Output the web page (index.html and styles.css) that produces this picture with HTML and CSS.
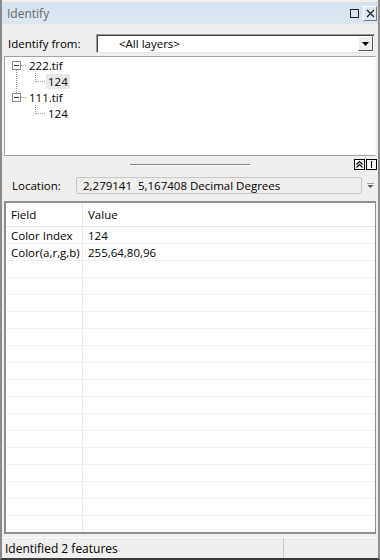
FILE: index.html
```html
<!DOCTYPE html>
<html>
<head>
<meta charset="utf-8">
<link rel="stylesheet" href="styles.css">
</head>
<body>
<div class="win">
  <div class="titlebar">
    <span class="title">Identify</span>
    <div class="tbtns">
      <span class="tb-max"><svg width="11" height="11" viewBox="0 0 11 11"><rect x="1.5" y="1.5" width="8" height="8" fill="none" stroke="#222" stroke-width="1"/></svg></span>
      <span class="tb-close"><svg width="11" height="11" viewBox="0 0 11 11"><path d="M2 2L9 9M9 2L2 9" stroke="#222" stroke-width="1.3"/></svg></span>
    </div>
  </div>
  <div class="fromrow">
    <span class="lbl">Identify from:</span>
    <div class="combo">
      <span class="combo-text">&lt;All layers&gt;</span>
      <span class="combo-btn"><svg width="7" height="4" viewBox="0 0 7 4"><path d="M0 0H7L3.5 4Z" fill="#000"/></svg></span>
    </div>
  </div>
  <div class="tree">
    <div class="node">
      <span class="pm"></span><span class="dots"></span><span class="ntext">222.tif</span>
    </div>
    <div class="leaf"><span class="ldots"></span><span class="ntext sel">124</span></div>
    <div class="node">
      <span class="pm"></span><span class="dots"></span><span class="ntext">111.tif</span>
    </div>
    <div class="leaf"><span class="ldots"></span><span class="ntext">124</span></div>
    <span class="vline"></span>
  </div>
  <div class="splitter">
    <span class="grip"></span>
    <div class="sbtns">
      <span class="sbtn"><svg width="9" height="9" viewBox="0 0 9 9"><path d="M1.5 4.5L4.5 1.5L7.5 4.5M1.5 7.5L4.5 4.5L7.5 7.5" fill="none" stroke="#000" stroke-width="1.2"/></svg></span>
      <span class="sbtn"><svg width="9" height="9" viewBox="0 0 9 9"><path d="M4.5 1V8" stroke="#000" stroke-width="1.2"/></svg></span>
    </div>
  </div>
  <div class="locrow">
    <span class="lbl">Location:</span>
    <div class="locbox">2,279141&nbsp; 5,167408 Decimal Degrees</div>
    <span class="locarrow"><svg width="7" height="6" viewBox="0 0 7 6"><path d="M0 0H7" stroke="#555"/><path d="M0.5 2H6.5L3.5 5Z" fill="#555"/></svg></span>
  </div>
  <div class="grid">
    <div class="ghead"><span class="c1">Field</span><span class="c2">Value</span></div>
    <div class="grow"><span class="c1">Color Index</span><span class="c2">124</span></div>
    <div class="grow"><span class="c1">Color(a,r,g,b)</span><span class="c2">255,64,80,96</span></div>
    <div class="grow"><span class="c1"></span><span class="c2"></span></div>
    <div class="grow"><span class="c1"></span><span class="c2"></span></div>
    <div class="grow"><span class="c1"></span><span class="c2"></span></div>
    <div class="grow"><span class="c1"></span><span class="c2"></span></div>
    <div class="grow"><span class="c1"></span><span class="c2"></span></div>
    <div class="grow"><span class="c1"></span><span class="c2"></span></div>
    <div class="grow"><span class="c1"></span><span class="c2"></span></div>
    <div class="grow"><span class="c1"></span><span class="c2"></span></div>
    <div class="grow"><span class="c1"></span><span class="c2"></span></div>
    <div class="grow"><span class="c1"></span><span class="c2"></span></div>
    <div class="grow"><span class="c1"></span><span class="c2"></span></div>
    <div class="grow"><span class="c1"></span><span class="c2"></span></div>
    <div class="grow"><span class="c1"></span><span class="c2"></span></div>
    <div class="grow"><span class="c1"></span><span class="c2"></span></div>
    <div class="grow"><span class="c1"></span><span class="c2"></span></div>
    <div class="grow"><span class="c1"></span><span class="c2"></span></div>
    <div class="gfill"><span class="c1"></span><span class="c2"></span></div>
  </div>
  <div class="status">
    <span class="st1">Identified 2 features</span>
    <span class="st2"></span>
  </div>
</div>
</body>
</html>
```
FILE: styles.css
```css
html, body {
  margin: 0;
  padding: 0;
  background: #f0efed;
}
body {
  width: 380px;
  height: 560px;
  overflow: hidden;
  font-family: "Open Sans", "DejaVu Sans", sans-serif;
  font-size: 11.5px;
  color: #000;
}
.win {
  width: 380px;
  height: 560px;
  box-sizing: border-box;
  border-left: 2px solid #8a8a8a;
  border-right: 2px solid #8a8a8a;
  border-bottom: 2px solid #3a3a3a;
  display: flex;
  flex-direction: column;
  background: #f0efed;
}
.titlebar {
  height: 22px;
  margin-top: 2px;
  background: linear-gradient(#d6e2ee, #dbe6f1);
  display: flex;
  align-items: center;
  justify-content: space-between;
  padding: 0 1px 0 5px;
  flex-shrink: 0;
}
.title {
  color: #6b6b6b;
  font-size: 12px;
}
.tbtns {
  display: flex;
  gap: 3px;
  align-items: center;
}
.tbtns span {
  width: 12px;
  height: 13px;
  display: flex;
  align-items: center;
  justify-content: center;
}
.tb-close {
  border: 1px solid #7a7a7a;
  border-top-color: #fff;
  border-left-color: #fff;
  background: #dde7f1;
}
.fromrow {
  display: flex;
  align-items: center;
  height: 19px;
  margin-top: 10px;
  padding-left: 6px;
  flex-shrink: 0;
}
.fromrow .lbl {
  width: 88px;
}
.combo {
  flex: 1;
  height: 19px;
  margin-right: 3px;
  background: #fff;
  box-sizing: border-box;
  border: 1px solid #9a9a9a;
  border-right-color: #e8e8e8;
  border-bottom-color: #e8e8e8;
  box-shadow: inset 1px 1px 0 #404040;
  display: flex;
  align-items: center;
}
.combo-text {
  flex: 1;
  padding-left: 22px;
}
.combo-btn {
  width: 15px;
  height: 15px;
  margin-right: 1px;
  background: #efeeec;
  border: 1px solid #fff;
  border-right-color: #555;
  border-bottom-color: #555;
  box-sizing: border-box;
  display: flex;
  align-items: center;
  justify-content: center;
}
.tree {
  position: relative;
  margin: 3px 2px 0 2px;
  height: 100px;
  background: #fff;
  box-sizing: border-box;
  border: 1px solid #a0a0a0;
  border-right-color: #f8f8f8;
  padding-top: 0;
  flex-shrink: 0;
}
.node, .leaf {
  height: 16px;
  display: flex;
  align-items: center;
}
.node {
  padding-left: 7px;
}
.leaf {
  padding-left: 30px;
}
.pm {
  width: 9px;
  height: 9px;
  box-sizing: border-box;
  border: 1px solid #8c8c8c;
  position: relative;
  background: #fff;
  z-index: 1;
}
.pm::after {
  content: "";
  position: absolute;
  left: 1px;
  top: 3px;
  width: 5px;
  height: 1px;
  background: #333;
}
.dots {
  width: 5px;
  border-top: 1px dotted #999;
  margin-right: 1px;
}
.ldots {
  position: relative;
  width: 9px;
  height: 8px;
  margin-top: -8px;
  border-left: 1px dotted #999;
  border-bottom: 1px dotted #999;
  margin-right: 1px;
}
.ntext {
  padding: 0 2px;
  line-height: 15px;
}
.sel {
  background: #e8e8e8;
}
.vline {
  position: absolute;
  left: 11px;
  top: 12px;
  height: 30px;
  border-left: 1px dotted #999;
}
.splitter {
  height: 16px;
  display: flex;
  align-items: center;
  justify-content: center;
  position: relative;
  flex-shrink: 0;
}
.grip {
  width: 120px;
  height: 1px;
  background: #8a8a8a;
  border-bottom: 1px solid #fff;
  margin-top: 2px;
}
.sbtns {
  position: absolute;
  right: 1px;
  top: 3px;
  display: flex;
  gap: 1px;
}
.sbtn {
  width: 11px;
  height: 11px;
  box-sizing: border-box;
  border: 1px solid #000;
  background: #fff;
  display: flex;
  align-items: center;
  justify-content: center;
}
.locrow {
  display: flex;
  align-items: center;
  height: 18px;
  margin-top: 4px;
  padding-left: 10px;
  flex-shrink: 0;
}
.locrow .lbl {
  width: 64px;
}
.locbox {
  width: 286px;
  height: 17px;
  box-sizing: border-box;
  border: 1px solid #c8c8c8;
  border-radius: 2px;
  background: #efeeec;
  padding-left: 6px;
  line-height: 15px;
}
.locarrow {
  margin-left: 5px;
  align-self: flex-start;
  margin-top: 1px;
}
.grid {
  margin: 7px 2px 0 2px;
  height: 333px;
  background: #fff;
  box-sizing: border-box;
  border: 2px solid #8e8e8e;
  border-right-width: 1px;
  display: flex;
  flex-direction: column;
  overflow: hidden;
  flex-shrink: 0;
}
.ghead, .grow, .gfill {
  display: flex;
  flex-shrink: 0;
}
.ghead {
  height: 23px;
  border-bottom: 1px solid #e6e6e6;
  align-items: stretch;
}
.grow {
  height: 17px;
  border-bottom: 1px solid #f0f0f0;
  box-sizing: border-box;
}
.gfill {
  flex: 1;
}
.c1 {
  width: 77px;
  box-sizing: border-box;
  border-right: 1px solid #e8e8e8;
  padding-left: 5px;
  display: flex;
  align-items: center;
  white-space: nowrap;
}
.c2 {
  flex: 1;
  padding-left: 5px;
  display: flex;
  align-items: center;
}
.status {
  flex: 1;
  display: flex;
  align-items: center;
  margin-top: 3px;
  border-top: 1px solid #fff;
}
.st1 {
  padding-left: 3px;
  width: 278px;
  border-right: 1px solid #c8c8c8;
  height: 100%;
  display: flex;
  align-items: center;
  font-size: 12px;
}
.st2 {
  flex: 1;
}
```
